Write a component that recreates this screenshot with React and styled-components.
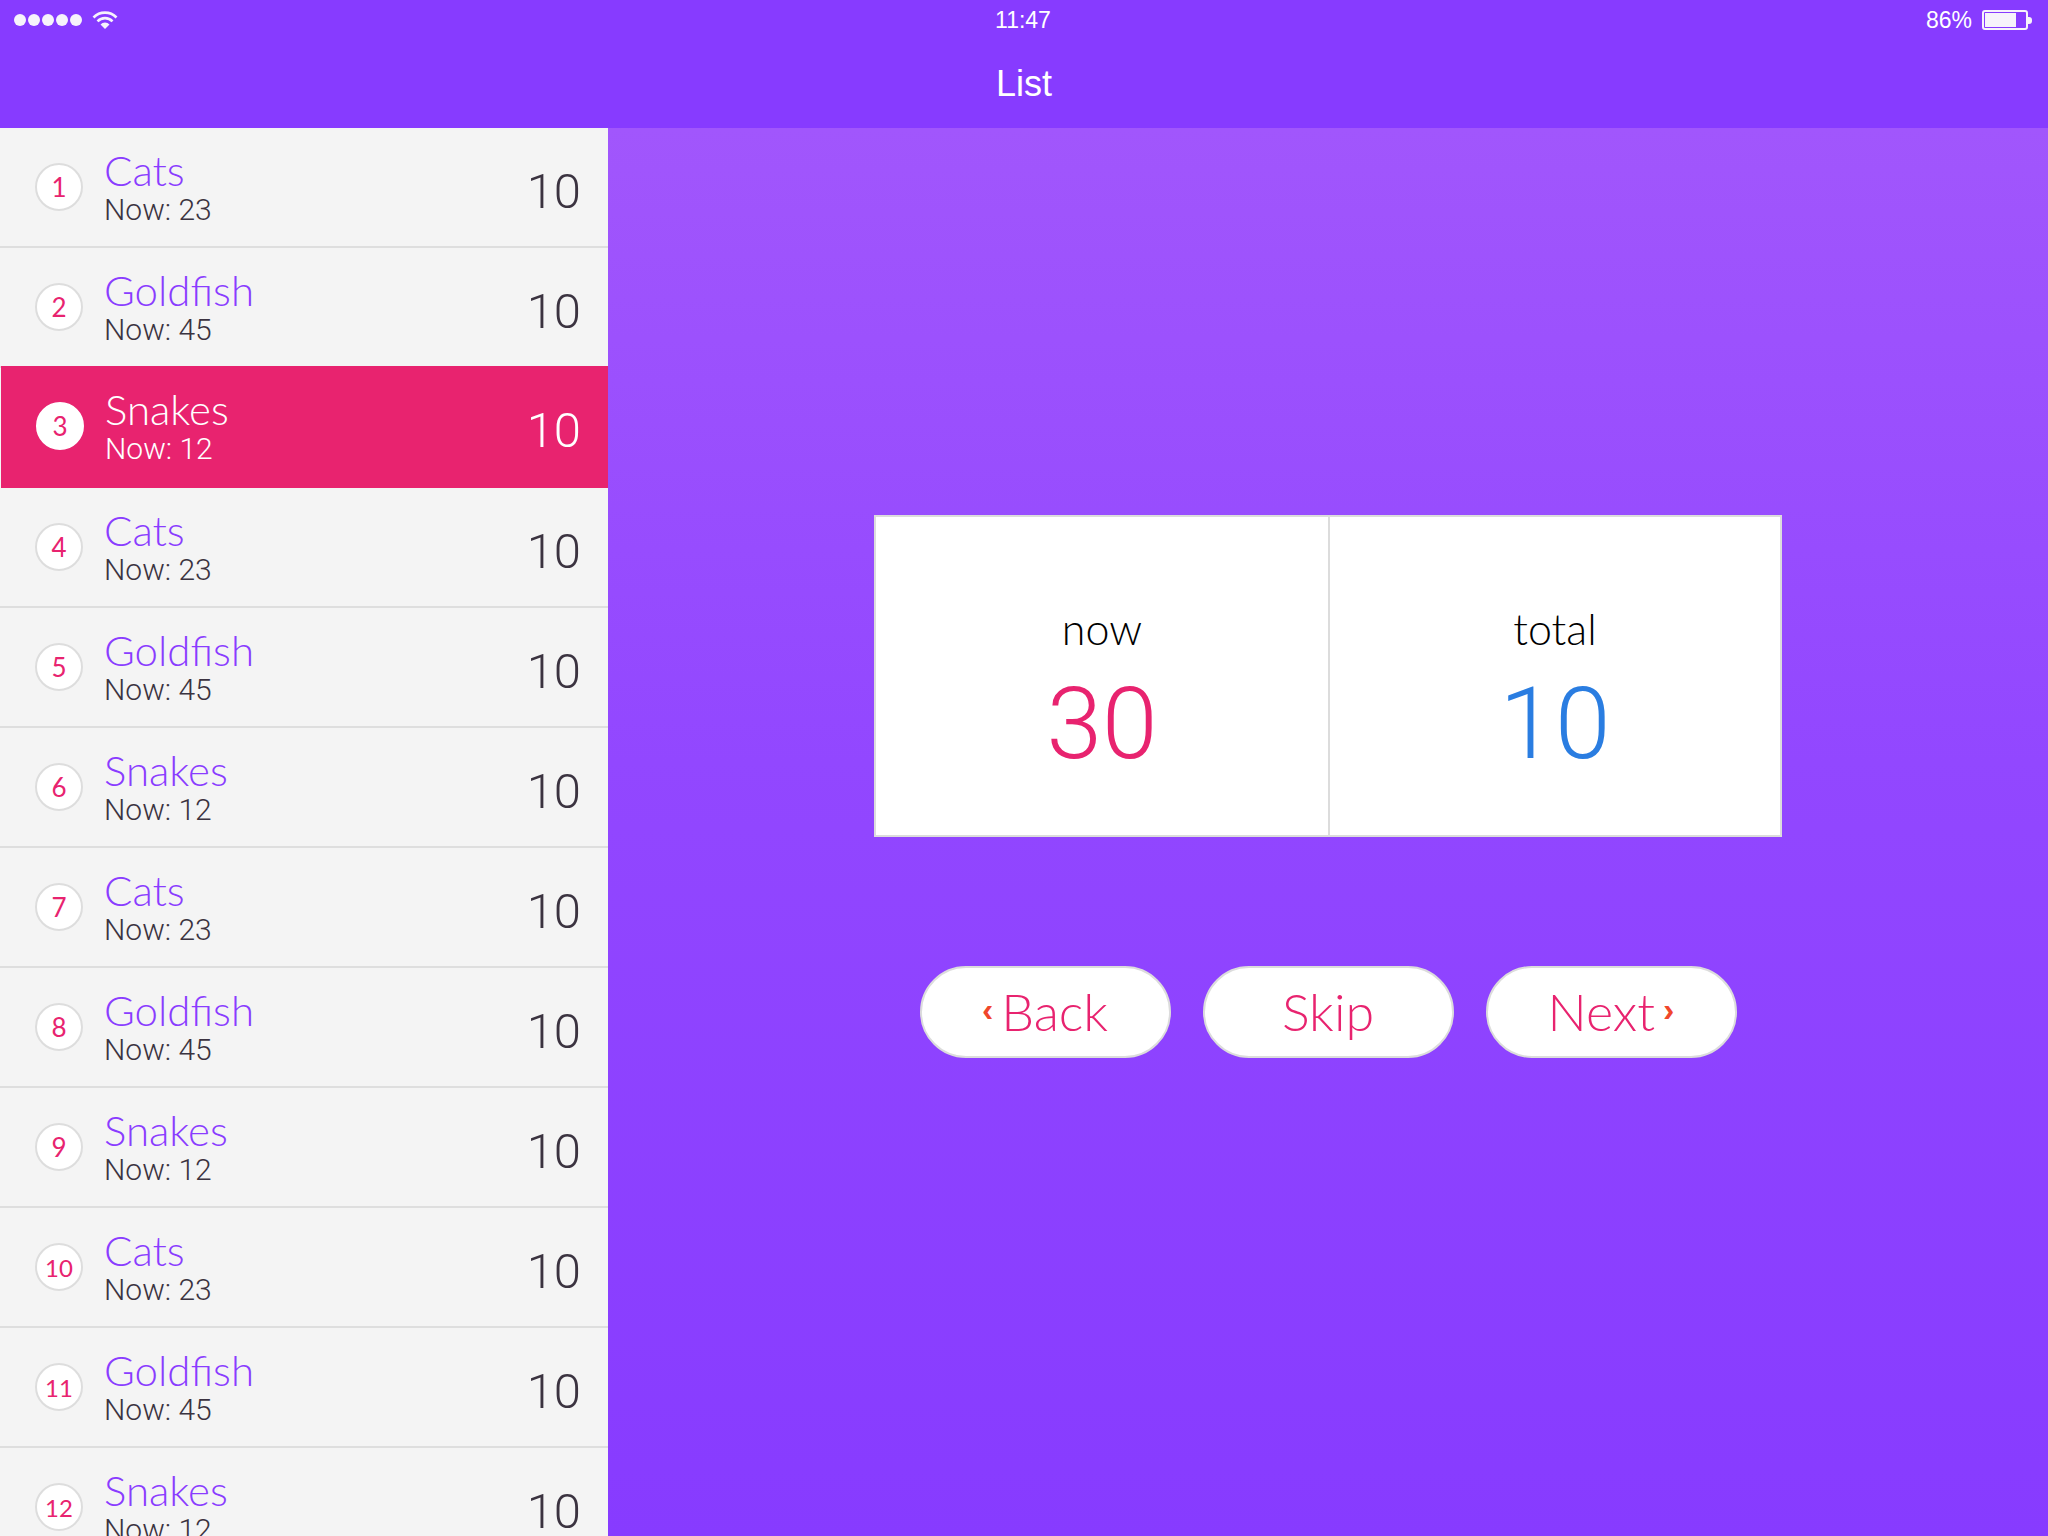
import React from "react";
import styled, { createGlobalStyle } from "styled-components";

const Global = createGlobalStyle`
  html, body { margin: 0; padding: 0; }
  body { width: 2048px; height: 1536px; overflow: hidden; background: #873bff; }
  #root { width: 2048px; height: 1536px; }
  * { box-sizing: border-box; }
`;

const Screen = styled.div`
  width: 2048px;
  height: 1536px;
  display: flex;
  flex-direction: column;
  overflow: hidden;
  font-family: "Lato", "Roboto", sans-serif;
`;

const Header = styled.header`
  background: #873bff;
  height: 128px;
  display: flex;
  flex-direction: column;
  color: #fff;
  flex-shrink: 0;
`;

const StatusBar = styled.div`
  height: 40px;
  display: grid;
  grid-template-columns: 1fr auto 1fr;
  align-items: center;
  padding: 0 16px 0 14px;
  font-family: "Liberation Sans", Arial, sans-serif;
  font-size: 23px;
`;

const StatusLeft = styled.div`
  display: flex;
  align-items: center;
  gap: 2px;
`;

const Dot = styled.span`
  width: 12px;
  height: 12px;
  border-radius: 50%;
  background: #f6f3fb;
`;

const StatusRight = styled.div`
  display: flex;
  align-items: center;
  justify-content: flex-end;
  gap: 10px;
`;

const Battery = styled.div`
  position: relative;
  width: 46px;
  height: 20px;
  border: 2px solid #f6f3fb;
  border-radius: 3px;
  padding: 1px;
  margin-right: 4px;
  &::after {
    content: "";
    position: absolute;
    right: -6px;
    top: 5px;
    width: 4px;
    height: 7px;
    border-radius: 0 3px 3px 0;
    background: #f6f3fb;
  }
`;

const BatteryFill = styled.div`
  height: 100%;
  background: #f6f3fb;
`;

const NavBar = styled.div`
  height: 88px;
  display: flex;
  align-items: center;
  justify-content: center;
  font-family: "Liberation Sans", Arial, sans-serif;
  font-size: 36px;
  padding-bottom: 1px;
`;

const Body = styled.main`
  flex: 1;
  display: flex;
  min-height: 0;
`;

const List = styled.ul`
  width: 608px;
  flex-shrink: 0;
  margin: 0;
  padding: 0;
  list-style: none;
  background: #f4f4f4;
  overflow: hidden;
`;

const Row = styled.li`
  display: flex;
  align-items: center;
  padding: 0 27px 0 35px;
  border-bottom: 2px solid ${(p) => (p.$active ? "#e8236f" : "#dedede")};
  background: ${(p) => (p.$active ? "#e8236f" : "#f4f4f4")};
  margin-top: ${(p) => (p.$active ? "-2px" : "0")};
  height: ${(p) => (p.$active ? "122px" : "120px")};
  margin-left: ${(p) => (p.$active ? "1px" : "0")};
`;

const Badge = styled.div`
  width: 48px;
  height: 48px;
  border-radius: 50%;
  background: #fff;
  border: 2px solid ${(p) => (p.$active ? "#fff" : "#dddddd")};
  color: #e8236f;
  display: flex;
  align-items: center;
  justify-content: center;
  font-family: "Lato", sans-serif;
  font-weight: 400;
  font-size: ${(p) => (p.$small ? "24px" : "26px")};
  flex-shrink: 0;
  margin-right: 21px;
`;

const Texts = styled.div`
  flex: 1;
  display: flex;
  flex-direction: column;
`;

const Title = styled.div`
  font-family: "Lato", sans-serif;
  font-weight: 300;
  font-size: 42px;
  line-height: 44px;
  color: ${(p) => (p.$active ? "#fff" : "#8a3cff")};
`;

const Sub = styled.div`
  font-family: "Roboto", sans-serif;
  font-weight: 300;
  font-size: 30px;
  line-height: 34px;
  margin-top: 1px;
  color: ${(p) => (p.$active ? "#fff" : "#3b3340")};
`;

const Count = styled.div`
  font-family: "Roboto", sans-serif;
  font-weight: 300;
  font-size: 49px;
  color: ${(p) => (p.$active ? "#fff" : "#3b3340")};
  margin-top: 8px;
`;

const Panel = styled.section`
  flex: 1;
  background: linear-gradient(to bottom, #a156fc 0%, #9247ff 45%, #873bff 100%);
  display: flex;
  flex-direction: column;
  align-items: center;
  padding-top: 387px;
`;

const Card = styled.div`
  width: 908px;
  height: 322px;
  background: #fff;
  border: 2px solid #dcdcdc;
  display: grid;
  grid-template-columns: 1fr 1fr;
`;

const Stat = styled.div`
  display: flex;
  flex-direction: column;
  align-items: center;
  justify-content: center;
  border-left: ${(p) => (p.$divider ? "2px solid #dcdcdc" : "none")};
  padding-top: 28px;
`;

const StatLabel = styled.div`
  font-family: "Lato", sans-serif;
  font-weight: 300;
  font-size: 43px;
  line-height: 44px;
  color: #000;
`;

const StatValue = styled.div`
  font-family: "Roboto", sans-serif;
  font-weight: 300;
  font-size: 100px;
  line-height: 100px;
  margin-top: 23px;
  color: ${(p) => p.$color};
`;

const Buttons = styled.div`
  display: flex;
  gap: 32px;
  margin-top: 129px;
`;

const PillButton = styled.button`
  width: 251px;
  height: 92px;
  border-radius: 46px;
  background: #fff;
  border: 2px solid #dcdcdc;
  color: #e8236f;
  font-family: "Lato", sans-serif;
  font-weight: 300;
  font-size: 52px;
  display: flex;
  align-items: center;
  justify-content: center;
  gap: 8px;
  padding: 0 0 2px;
  cursor: pointer;
`;

const Chevron = styled.span`
  color: #f0472c;
  font-family: "Liberation Sans", sans-serif;
  font-size: 34px;
  font-weight: 700;
  margin-top: -4px;
`;

const Wifi = () => (
  <svg width="26" height="20" viewBox="0 0 26 20" style={{ marginLeft: 8 }}>
    <path d="M1.5 7.5 A16 16 0 0 1 24.5 7.5" stroke="#f6f3fb" strokeWidth="2.6" fill="none" />
    <path d="M5.5 11.3 A10.5 10.5 0 0 1 20.5 11.3" stroke="#f6f3fb" strokeWidth="2.6" fill="none" />
    <path d="M8.5 14.5 A6 6 0 0 1 17.5 14.5 L13 19 Z" fill="#f6f3fb" />
  </svg>
);

const items = [
  ["Cats", 23],
  ["Goldfish", 45],
  ["Snakes", 12],
];

export default function App() {
  const rows = Array.from({ length: 12 }, (_, i) => ({
    n: i + 1,
    name: items[i % 3][0],
    now: items[i % 3][1],
  }));
  return (
    <>
      <Global />
      <Screen>
        <Header>
          <StatusBar>
            <StatusLeft>
              {[0, 1, 2, 3, 4].map((d) => (
                <Dot key={d} />
              ))}
              <Wifi />
            </StatusLeft>
            <div>11:47</div>
            <StatusRight>
              <span>86%</span>
              <Battery>
                <BatteryFill style={{ width: "78%" }} />
              </Battery>
            </StatusRight>
          </StatusBar>
          <NavBar>List</NavBar>
        </Header>
        <Body>
          <List>
            {rows.map((r) => {
              const active = r.n === 3;
              return (
                <Row key={r.n} $active={active}>
                  <Badge $active={active} $small={r.n >= 10}>
                    {r.n}
                  </Badge>
                  <Texts>
                    <Title $active={active}>{r.name}</Title>
                    <Sub $active={active}>Now: {r.now}</Sub>
                  </Texts>
                  <Count $active={active}>10</Count>
                </Row>
              );
            })}
          </List>
          <Panel>
            <Card>
              <Stat>
                <StatLabel>now</StatLabel>
                <StatValue $color="#e8236f">30</StatValue>
              </Stat>
              <Stat $divider>
                <StatLabel>total</StatLabel>
                <StatValue $color="#2a7de1">10</StatValue>
              </Stat>
            </Card>
            <Buttons>
              <PillButton>
                <Chevron>‹</Chevron>Back
              </PillButton>
              <PillButton>Skip</PillButton>
              <PillButton>
                Next<Chevron>›</Chevron>
              </PillButton>
            </Buttons>
          </Panel>
        </Body>
      </Screen>
    </>
  );
}
